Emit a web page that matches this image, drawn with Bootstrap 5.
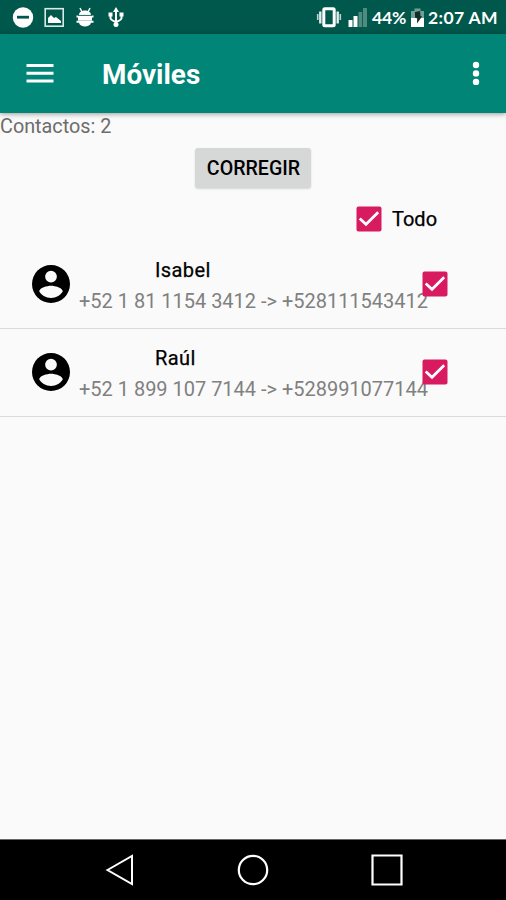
<!DOCTYPE html>
<html lang="es">
<head>
<meta charset="utf-8">
<meta name="viewport" content="width=device-width, initial-scale=1">
<title>Móviles</title>
<link href="https://cdn.jsdelivr.net/npm/bootstrap@5.3.0/dist/css/bootstrap.min.css" rel="stylesheet">
<style>
body{font-family:Roboto,"Liberation Sans",sans-serif;font-size:20px;line-height:24px;background:#fafafa;color:#000;overflow:hidden}
svg{display:block;flex:none}
.screen{height:900px}
.status-bar{height:34px;background:#00574b;color:#fff;padding:2px 8px 0 12px;font-family:Lato,sans-serif;font-weight:700;font-size:17.5px}
.status-bar svg{margin-top:-2px}
.clock{width:70px;letter-spacing:.38px;white-space:nowrap}
.pct{width:35px;letter-spacing:-.1px}
.app-bar{height:79px;background:#008577;color:#fff;padding:0 20px 1px 26px;box-shadow:0 1px 5px rgba(0,0,0,.4);z-index:1}
.app-title{font-size:27.9px;font-weight:700;line-height:32px;margin-left:48px;padding-top:4px}
.count{color:#6c6c6c;padding:2px 0 1px;font-size:19.8px}
.btn-fix{width:116px;height:40px;margin-top:8px;font-size:19.6px;font-weight:500;line-height:24px;background:#d6d7d7;border-radius:3px;box-shadow:0 1px 2px rgba(0,0,0,.15)}
.btn-fix span{display:block;padding:2px 0 0 1px}
.all-row{height:61px;padding-left:356px;gap:10px}
.contact{height:88px;padding:8px 0 0 32px;border-bottom:1.5px solid #dadada}
.contact-first{height:80px;padding-top:0}
.avatar{margin-top:16px}
.contact-text{margin-left:9px;width:343px}
.contact-name{padding-left:76px;margin-top:9px;font-size:20px;letter-spacing:.1px;-webkit-text-stroke:.25px #000}
.contact-phone{color:#808080;margin-top:7px;white-space:nowrap;letter-spacing:-.015px}
.all-label{-webkit-text-stroke:.25px #000}
.contact-name{letter-spacing:.4px}
.tick{margin-top:22px;position:relative}
.nav-keys{height:61px;background:#000;border-top:1px solid #666}
.keys-inner{padding:0 103px 0 105px}
</style>
</head>
<body>
<svg class="d-none">
  <symbol id="check" viewBox="0 0 26 26"><rect x=".5" y=".5" width="25" height="25" rx="2" fill="#d81b60"/><path d="M3.700 12.500 10 18.300 22.200 6.200" fill="none" stroke="#fff" stroke-width="2.700"/></symbol>
  <symbol id="person" viewBox="2 2 20 20"><path d="M12 2a10 10 0 1 0 0 20 10 10 0 0 0 0-20zm0 3a3.100 3.100 0 1 1 0 6.200A3.100 3.100 0 0 1 12 5zm0 14.400a7.200 7.200 0 0 1-6.200-3.400c.03-1.990 4.200-3.080 6.200-3.080s6.170 1.090 6.200 3.080a7.200 7.200 0 0 1-6.200 3.400z"/></symbol>
</svg>
<div class="screen d-flex flex-column">
  <header class="status-bar d-flex align-items-center">
    <svg width="116" height="34" viewBox="12 0 116 34">
      <circle cx="23" cy="17.5" r="10.200" fill="#fff"/><path d="M17 17.200h12" stroke="#00574b" stroke-width="2.800"/>
      <rect x="45.200" y="8.700" width="18" height="17.500" fill="none" stroke="#dbe9e6" stroke-width="1.600"/><path d="M48 23v-5l3-3 3 3 2-1 5 4v2z" fill="#fff"/>
      <path d="m80 8 2 4m8-4-2 4" stroke="#fff" stroke-width="1.500"/><path d="M79 15c0-6 12-6 12 0zM76.500 15.500h17v2h-17zM78 17.500h14v3H78zM76.500 20.800h17v2h-17zM79 22.800h12c-1 5-11 5-12 0z" fill="#fff"/><path d="M78 15.400h14" stroke="#00574b" stroke-width=".7"/>
      <path d="M116 10v15M110.500 15v3q0 2 5.500 4M121.500 15v3q0 2-5.500 4" fill="none" stroke="#fff" stroke-width="2"/><path d="m116 7 3 5h-6zM108.500 12.500h4v4h-4zM119.500 12.500h4v4h-4z" fill="#fff"/><circle cx="116" cy="24.500" r="2.500" fill="#fff"/>
    </svg>
    <svg class="ms-auto" width="57" height="34" viewBox="315 0 57 34">
      <rect x="323.800" y="8.800" width="10.400" height="17" rx="1" fill="none" stroke="#fff" stroke-width="3"/><path d="M320.300 11.500v12M337.700 11.500v12" stroke="#e2ecea" stroke-width="2.400"/><path d="M317.700 14v6M340.300 14v6" stroke="#bdd2ce" stroke-width="1.600"/>
      <path d="M348.500 20h4v7h-4zM353.500 16h4v11h-4z" fill="#fff"/><path d="M358.500 12h3.700v15h-3.700zM363 8h4v19h-4z" fill="#508b81"/>
    </svg>
    <span class="pct">44%</span>
    <svg width="21" height="34" viewBox="407 0 21 34"><path d="M411 11h3.500V8.500h6V11h3.500v8h-13z" fill="#6f9f97"/><path d="M411 18h13v9h-13z" fill="#fff"/><path d="m415 12 5-1 .5 5 1.500.5-5 7 .2-5-2.200-1z" fill="#122d28"/></svg>
    <span class="clock">2:07 AM</span>
  </header>
  <nav class="app-bar d-flex align-items-center position-relative">
    <svg width="28" height="20" viewBox="0 0 28 20"><path d="M.5 2.500h27M.5 10.200h27M.5 18h27" stroke="#fff" stroke-width="2.900"/></svg>
    <span class="app-title">Móviles</span>
    <svg class="ms-auto" width="20" height="26" viewBox="0 0 20 26"><g fill="#fff"><circle cx="10" cy="5" r="3.200"/><circle cx="10" cy="13.400" r="3.200"/><circle cx="10" cy="21.900" r="3.200"/></g></svg>
  </nav>
  <main class="flex-grow-1">
    <div class="count">Contactos: 2</div>
    <button type="button" class="btn btn-fix d-block mx-auto p-0 border-0 text-black"><span>CORREGIR</span></button>
    <div class="all-row d-flex align-items-center"><svg width="26" height="26"><use href="#check"/></svg><span class="all-label">Todo</span></div>
    <div class="contact contact-first d-flex align-items-start">
      <svg class="avatar" width="38" height="38"><use href="#person"/></svg>
      <div class="contact-text"><div class="contact-name">Isabel</div><div class="contact-phone">+52 1 81 1154 3412 -&gt; +528111543412</div></div>
      <svg class="tick" width="26" height="26"><use href="#check"/></svg>
    </div>
    <div class="contact d-flex align-items-start">
      <svg class="avatar" width="38" height="38"><use href="#person"/></svg>
      <div class="contact-text"><div class="contact-name">Raúl</div><div class="contact-phone">+52 1 899 107 7144 -&gt; +528991077144</div></div>
      <svg class="tick" width="26" height="26"><use href="#check"/></svg>
    </div>
  </main>
  <footer class="nav-keys">
    <div class="keys-inner d-flex justify-content-between align-items-center h-100">
      <svg width="29" height="32" viewBox="0 0 29 32" fill="none" stroke="#fff" stroke-width="2"><path d="M2.500 16 27 2v28z"/></svg>
      <svg width="32" height="32" viewBox="0 0 32 32" fill="none" stroke="#fff" stroke-width="2.200"><circle cx="16" cy="16" r="14.200"/></svg>
      <svg width="32" height="32" viewBox="0 0 32 32" fill="none" stroke="#fff" stroke-width="2.200"><path d="M1.500 1.500h29v29h-29z"/></svg>
    </div>
  </footer>
</div>
<script src="https://cdn.jsdelivr.net/npm/bootstrap@5.3.0/dist/js/bootstrap.bundle.min.js"></script>
</body>
</html>
